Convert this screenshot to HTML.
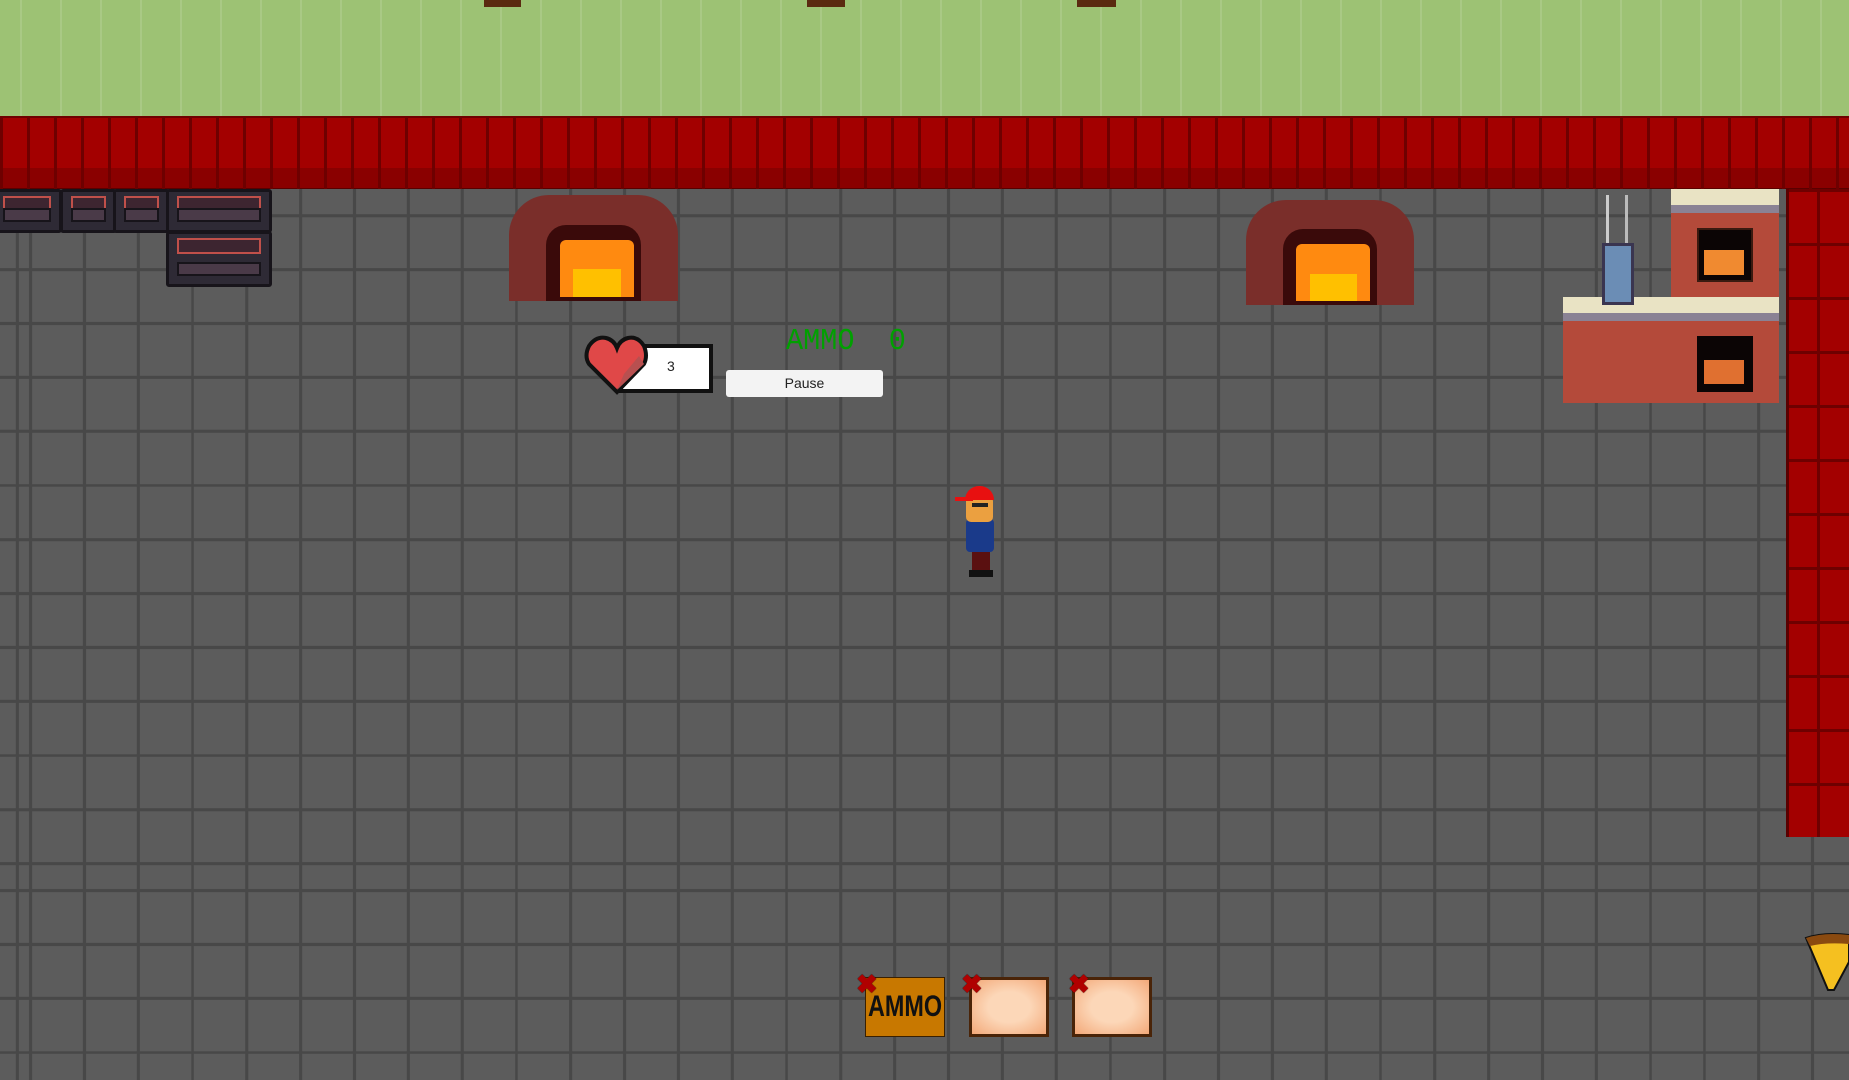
<!DOCTYPE html>
<html><head><meta charset="utf-8"><style>
*{margin:0;padding:0;box-sizing:border-box}
body{width:1849px;height:1080px;overflow:hidden;position:relative;background:#595959;font-family:"Liberation Sans",sans-serif}
.a{position:absolute}
#floor{left:0;top:189px;width:1849px;height:891px;background-color:#5c5c5c;
background-image:repeating-linear-gradient(90deg,#484848 0 3px,transparent 3px 54px),repeating-linear-gradient(180deg,#484848 0 3px,transparent 3px 54px);
background-position:29px 0,0 -191px}
#grass{left:0;top:0;width:1849px;height:116px;background:#9dc274;
background-image:repeating-linear-gradient(90deg,transparent 0 20px,rgba(255,255,255,.12) 20px 22px,transparent 22px 40px);}
#wall{left:0;top:116px;width:1849px;height:73px;background:#a30000;
background-image:repeating-linear-gradient(90deg,#6e0000 0 3px,transparent 3px 27px),linear-gradient(180deg,transparent 0 50px,#8a0000 50px 70px,#5a0000 70px 73px);
border-top:2px solid #700000}
#rwall{left:1786px;top:189px;width:63px;height:648px;background:#a30000;
background-image:repeating-linear-gradient(180deg,#6e0000 0 3px,transparent 3px 54px),repeating-linear-gradient(90deg,transparent 0 28px,#6e0000 28px 31px,transparent 31px 63px);border-left:3px solid #5a0000}
.stove{background:#2e2a35;border:3px solid #17141a;border-radius:3px}
.stove::before{content:"";position:absolute;left:8px;right:8px;top:4px;height:12px;border:2px solid #c0504a;background:#3d2530}
.stove::after{content:"";position:absolute;left:8px;right:8px;bottom:8px;height:10px;background:#4a3a48;border:2px solid #17141a}
.oven{background:#7a2e2a;border-radius:40px 40px 0 0}
.oven i{position:absolute;left:22%;right:22%;top:28%;bottom:0;background:#3a0a0a;border-radius:20px 20px 0 0}
.oven b{position:absolute;left:30%;right:26%;top:42%;bottom:4px;background:#ff8a10;border-radius:6px 6px 0 0}
.oven u{position:absolute;left:38%;right:34%;top:70%;bottom:4px;background:#ffc000}
.slot{border:3px solid #4a2408;background:radial-gradient(#fcd7b8 40%,#f3a878)}
.x{color:#b00000;font-size:26px;font-weight:bold;line-height:1;text-shadow:0 0 1px #000}
</style></head><body>
<div id="floor" class="a"></div>
<div id="grass" class="a"></div>
<div class="a" style="left:484px;top:0;width:37px;height:7px;background:#5a2a10"></div>
<div class="a" style="left:807px;top:0;width:38px;height:7px;background:#5a2a10"></div>
<div class="a" style="left:1077px;top:0;width:39px;height:7px;background:#5a2a10"></div>
<div id="wall" class="a"></div>
<div id="rwall" class="a"></div>

<div class="a stove" style="left:-8px;top:189px;width:70px;height:44px"></div>
<div class="a stove" style="left:60px;top:189px;width:57px;height:44px"></div>
<div class="a stove" style="left:113px;top:189px;width:57px;height:44px"></div>
<div class="a stove" style="left:166px;top:189px;width:106px;height:44px"></div>
<div class="a stove" style="left:166px;top:231px;width:106px;height:56px"></div>

<div class="a oven" style="left:509px;top:195px;width:169px;height:106px"><i></i><b></b><u></u></div>
<div class="a oven" style="left:1246px;top:200px;width:168px;height:105px"><i></i><b></b><u></u></div>

<!-- fireplace -->
<div class="a" style="left:1563px;top:300px;width:216px;height:103px;background:#b44a3a"></div>
<div class="a" style="left:1563px;top:297px;width:216px;height:24px;background:#e9e3c4;border-bottom:8px solid #8a8294"></div>
<div class="a" style="left:1671px;top:189px;width:108px;height:108px;background:#b44a3a"></div>
<div class="a" style="left:1671px;top:189px;width:108px;height:24px;background:#e9e3c4;border-bottom:8px solid #8a8294"></div>
<div class="a" style="left:1697px;top:228px;width:56px;height:54px;background:#0b0505;border:2px solid #3a1a10"></div>
<div class="a" style="left:1704px;top:250px;width:40px;height:25px;background:#f08a30"></div>
<div class="a" style="left:1697px;top:336px;width:56px;height:56px;background:#0b0505"></div>
<div class="a" style="left:1704px;top:360px;width:40px;height:24px;background:#e07030"></div>
<div class="a" style="left:1602px;top:243px;width:32px;height:62px;background:#6b8db5;border:3px solid #3a3550"></div>
<div class="a" style="left:1606px;top:195px;width:22px;height:48px;border-left:3px solid #ccc;border-right:3px solid #bbb"></div>

<!-- HUD -->
<div class="a" style="left:619px;top:344px;width:94px;height:49px;background:#fff;border:4px solid #111"></div>
<div class="a" style="left:667px;top:358px;font-size:14px;color:#222;width:10px">3</div>
<svg class="a" style="left:584px;top:334px" width="66" height="62" viewBox="0 0 66 62"><path d="M33 58 L5 30 Q0 22 5 12 Q12 2 22 4 Q30 6 33 14 Q36 6 44 4 Q54 2 60 12 Q64 22 60 30 Z" fill="#e04848" stroke="#111" stroke-width="4"/><path d="M40 40 L55 22 L60 30 L33 56Z" fill="#b85050"/></svg>
<div class="a" style="left:786px;top:324px;font-family:'Liberation Mono',monospace;font-size:31px;color:#00a000;white-space:pre;transform:scaleX(.92);transform-origin:left">AMMO  0</div>
<div class="a" style="left:726px;top:370px;width:157px;height:27px;background:#f3f3f3;border-radius:3px;font-size:14px;color:#222;text-align:center;line-height:27px">Pause</div>

<!-- character -->
<div class="a" style="left:972px;top:550px;width:18px;height:22px;background:#5a1010"></div>
<div class="a" style="left:969px;top:570px;width:24px;height:7px;background:#111"></div>
<div class="a" style="left:966px;top:519px;width:28px;height:33px;background:#1a3a8a;border-radius:4px"></div>
<div class="a" style="left:966px;top:496px;width:27px;height:26px;background:#eba040;border-radius:5px"></div>
<div class="a" style="left:972px;top:503px;width:16px;height:4px;background:#222"></div>
<div class="a" style="left:965px;top:486px;width:29px;height:14px;background:#e81010;border-radius:14px 14px 0 0"></div>
<div class="a" style="left:955px;top:497px;width:18px;height:4px;background:#e81010"></div>

<!-- inventory -->
<div class="a" style="left:865px;top:977px;width:80px;height:60px;background:#c87800;border:1px solid #3a2000"></div>
<div class="a" style="left:868px;top:977px;width:74px;height:60px;font-weight:bold;font-size:30px;color:#111;line-height:60px;white-space:nowrap;transform:scaleX(.78);transform-origin:left">AMMO</div>
<div class="a slot" style="left:969px;top:977px;width:80px;height:60px"></div>
<div class="a slot" style="left:1072px;top:977px;width:80px;height:60px"></div>
<div class="a x" style="left:856px;top:971px">✖</div>
<div class="a x" style="left:961px;top:971px">✖</div>
<div class="a x" style="left:1068px;top:971px">✖</div>

<!-- pizza -->
<svg class="a" style="left:1804px;top:932px" width="45" height="62" viewBox="0 0 45 62"><path d="M2 6 Q20 0 45 3 L45 30 L30 58 L24 58 Z" fill="#f5c020" stroke="#111" stroke-width="2"/><path d="M2 6 Q20 0 45 3 L45 12 Q22 10 6 14Z" fill="#8a4a10"/></svg>
</body></html>
